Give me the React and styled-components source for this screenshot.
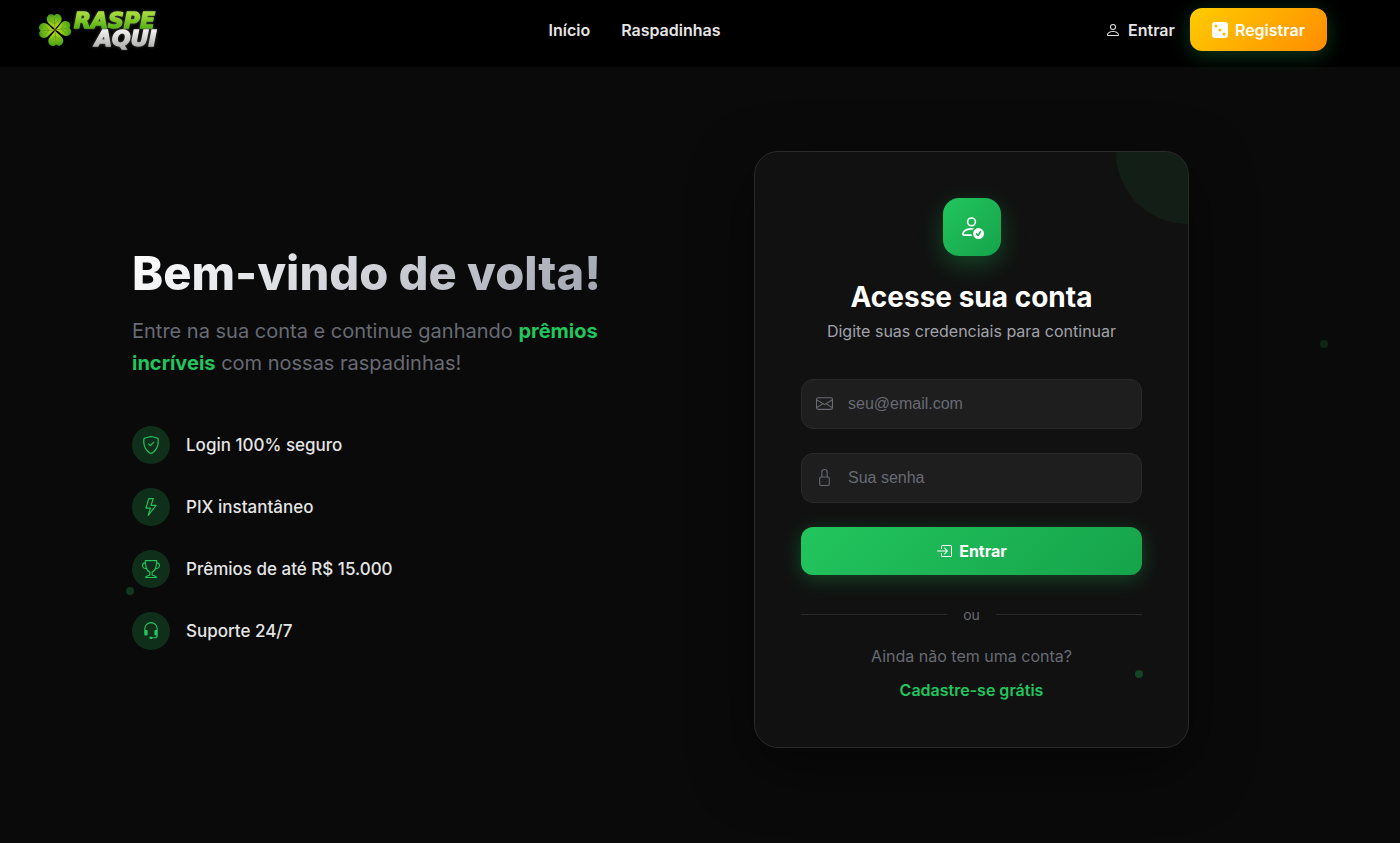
import React from "react";
import styled, { createGlobalStyle } from "styled-components";
import {
  BsBoxArrowInRight,
  BsDice3Fill,
  BsEnvelope,
  BsHeadset,
  BsLightning,
  BsLock,
  BsPerson,
  BsPersonCheck,
  BsShieldCheck,
  BsTrophy
} from "react-icons/bs";

const Colors = {
  Primary: "#22c55e",
  PrimaryDark: "#16a34a",
  Background: "#0a0a0a",
  Card: "#111111",
  Field: "#1e1e1e",
  Border: "#2a2a2a",
  Text: "#e5e5e5",
  Muted: "#a1a1aa",
  Faint: "#686a74"
};

const GlobalStyle = createGlobalStyle`
  *, *::before, *::after {
    box-sizing: border-box;
  }

  body {
    margin: 0;
    background: ${Colors.Background};
    color: ${Colors.Text};
    font-family: Inter, sans-serif;
    font-size: 16px;
  }
`;

const Page = styled.div`
  position: relative;
  min-height: 100vh;
  display: flex;
  flex-direction: column;
  overflow: hidden;
`;

const Header = styled.header`
  padding: 8px 73px 16px 38px;
  display: flex;
  align-items: center;
  justify-content: space-between;
  background: #000;
`;

const LogoLink = styled.a`
  display: flex;
`;

const Nav = styled.nav`
  display: flex;
  gap: 31px;
`;

const NavLink = styled.a`
  display: flex;
  align-items: center;
  gap: 7px;
  color: ${Colors.Text};
  font-weight: 600;
  line-height: 24px;
  text-decoration: none;
`;

const Actions = styled.div`
  display: flex;
  align-items: center;
  gap: 15px;
`;

const Register = styled.a`
  height: 43px;
  padding: 0 22px;
  display: flex;
  align-items: center;
  gap: 7px;
  border-radius: 12px;
  background: linear-gradient(135deg, #ffcc00, #ff8c00);
  box-shadow: 0 4px 20px rgba(34, 197, 94, 0.3);
  color: #fff;
  font-weight: 600;
  text-decoration: none;
`;

const Main = styled.main`
  flex: 1;
  padding: 32px 211px 44px 132px;
  display: flex;
  align-items: center;
  justify-content: space-between;
  gap: 64px;
`;

const Welcome = styled.section`
  flex: 0 1 500px;
`;

const WelcomeTitle = styled.h1`
  width: fit-content;
  margin: 0 0 17px;
  background: linear-gradient(135deg, #fff, #a1a5b0);
  background-clip: text;
  color: transparent;
  font-size: 47px;
  font-weight: 800;
  line-height: 50px;
`;

const WelcomeText = styled.p`
  margin: 0 0 47px;
  color: ${Colors.Faint};
  font-size: 20px;
  line-height: 32px;

  strong {
    color: ${Colors.Primary};
    font-weight: 700;
  }
`;

const Features = styled.ul`
  margin: 0;
  padding: 0;
  display: grid;
  gap: 24px;
  list-style: none;
`;

const Feature = styled.li`
  display: flex;
  align-items: center;
  gap: 16px;
  font-size: 17px;
  font-weight: 500;
`;

const FeatureIcon = styled.span`
  width: 38px;
  height: 38px;
  display: grid;
  place-items: center;
  border-radius: 50%;
  background: rgba(34, 197, 94, 0.2);
  color: ${Colors.Primary};
`;

const Card = styled.section`
  position: relative;
  flex: 0 0 435px;
  padding: 46px;
  overflow: hidden;
  border: 1px solid ${Colors.Border};
  border-radius: 24px;
  background: ${Colors.Card};
  box-shadow: 0 20px 60px rgba(0, 0, 0, 0.5);
  text-align: center;

  &::before {
    content: "";
    position: absolute;
    top: -72px;
    right: -72px;
    width: 144px;
    height: 144px;
    border-radius: 50%;
    background: linear-gradient(135deg, ${Colors.Primary}, ${Colors.PrimaryDark});
    opacity: 0.08;
  }
`;

const CardIcon = styled.div`
  width: 58px;
  height: 58px;
  margin: 0 auto 24px;
  display: grid;
  place-items: center;
  border-radius: 16px;
  background: linear-gradient(135deg, ${Colors.Primary}, ${Colors.PrimaryDark});
  box-shadow: 0 8px 24px rgba(34, 197, 94, 0.3);
  color: #fff;
`;

const CardTitle = styled.h2`
  margin: 0 0 5px;
  color: #fff;
  font-size: 28px;
  font-weight: 700;
  line-height: 34px;
`;

const CardText = styled.p`
  margin: 0 0 36px;
  color: ${Colors.Muted};
  line-height: 24px;
`;

const Form = styled.form`
  display: grid;
  gap: 24px;
`;

const Field = styled.label`
  height: 50px;
  padding: 0 14px;
  display: flex;
  align-items: center;
  gap: 15px;
  border: 1px solid ${Colors.Border};
  border-radius: 12px;
  background: ${Colors.Field};
  color: ${Colors.Faint};

  svg {
    flex: none;
  }
`;

const Input = styled.input`
  flex: 1;
  min-width: 0;
  padding: 0;
  border: 0;
  outline: none;
  background: transparent;
  color: #fff;
  font: 16px "Liberation Sans", sans-serif;

  &::placeholder {
    color: ${Colors.Faint};
  }
`;

const Submit = styled.button`
  height: 48px;
  display: flex;
  align-items: center;
  justify-content: center;
  gap: 7px;
  border: 0;
  border-radius: 12px;
  background: linear-gradient(135deg, ${Colors.Primary}, ${Colors.PrimaryDark});
  box-shadow: 0 4px 20px rgba(34, 197, 94, 0.3);
  color: #fff;
  font: 700 16px Inter, sans-serif;
  cursor: pointer;
`;

const Divider = styled.div`
  margin: 28px 0 17px;
  display: flex;
  align-items: center;
  gap: 16px;
  color: ${Colors.Faint};
  font-size: 14px;
  line-height: 24px;

  &::before,
  &::after {
    content: "";
    flex: 1;
    height: 1px;
    background: ${Colors.Border};
  }
`;

const SignupText = styled.p`
  margin: 0 0 11px;
  color: ${Colors.Faint};
  line-height: 24px;
`;

const SignupLink = styled.a`
  display: block;
  color: ${Colors.Primary};
  font-weight: 600;
  line-height: 22px;
  text-decoration: none;
`;

const Particle = styled.span`
  position: absolute;
  top: ${p => p.$top};
  left: ${p => p.$left};
  width: 8px;
  height: 8px;
  border-radius: 50%;
  background: ${Colors.Primary};
  opacity: ${p => p.$opacity};
  pointer-events: none;
`;

const features = [
  { icon: BsShieldCheck, label: "Login 100% seguro" },
  { icon: BsLightning, label: "PIX instantâneo" },
  { icon: BsTrophy, label: "Prêmios de até R$ 15.000" },
  { icon: BsHeadset, label: "Suporte 24/7" }
];

const particles = [
  { top: "340px", left: "94.3%", opacity: 0.15 },
  { top: "587px", left: "9%", opacity: 0.25 },
  { top: "670px", left: "81.1%", opacity: 0.28 }
];

const Logo = () => (
  <svg width="126" height="43" viewBox="0 0 126 43">
    <defs>
      <radialGradient id="leaf" cx="0" cy="0" r="17" gradientUnits="userSpaceOnUse">
        <stop offset="0" stopColor="#d8e020" />
        <stop offset="0.5" stopColor="#86c41c" />
        <stop offset="1" stopColor="#3f9a14" />
      </radialGradient>
      <linearGradient id="raspe" x1="0" y1="0" x2="0" y2="1">
        <stop offset="0.2" stopColor="#a8dc3c" />
        <stop offset="0.8" stopColor="#56b214" />
      </linearGradient>
      <linearGradient id="aqui" x1="0" y1="0" x2="0" y2="1">
        <stop offset="0.2" stopColor="#f0f0f0" />
        <stop offset="0.8" stopColor="#b5b5b5" />
      </linearGradient>
      <filter id="glow" x="-20%" y="-30%" width="140%" height="160%">
        <feDropShadow dx="0" dy="0" stdDeviation="1.500" floodColor="#b8c8a0" floodOpacity="0.4" />
      </filter>
    </defs>
    <g transform="translate(17 22)">
      {[-4, 82, 176, 268].map(angle => (
        <g key={angle} transform={`rotate(${angle})`}>
          <path
            d="M0 0C-1 -4 -7.500 -6 -7.500 -11C-7.500 -15.500 -2.500 -17.500 0 -14.500C2.500 -17.500 7.500 -15.500 7.500 -11C7.500 -6 1 -4 0 0Z"
            fill="url(#leaf)"
          />
          <path
            d="M0 -1V-12M0 -6L-4 -10M0 -6L4 -10"
            fill="none"
            stroke="#4c8f12"
            strokeWidth="0.600"
          />
        </g>
      ))}
      <circle r="1.200" fill="#4a3d08" />
    </g>
    <g
      fontFamily="DejaVu Sans, sans-serif"
      fontWeight="700"
      fontStyle="italic"
      strokeWidth="1.400"
      filter="url(#glow)"
    >
      <text x="36" y="20" fontSize="22" fill="url(#raspe)" stroke="url(#raspe)">
        RASPE
      </text>
      <text x="57" y="38" fontSize="22" fill="url(#aqui)" stroke="url(#aqui)">
        AQUI
      </text>
    </g>
  </svg>
);

const App = () => {
  return (
    <Page>
      <GlobalStyle />
      <Header>
        <LogoLink href="#inicio" aria-label="Raspe Aqui">
          <Logo />
        </LogoLink>
        <Nav>
          <NavLink href="#inicio">Início</NavLink>
          <NavLink href="#raspadinhas">Raspadinhas</NavLink>
        </Nav>
        <Actions>
          <NavLink href="#entrar">
            <BsPerson size={16} />
            Entrar
          </NavLink>
          <Register href="#registrar">
            <BsDice3Fill size={16} />
            Registrar
          </Register>
        </Actions>
      </Header>

      <Main>
        <Welcome>
          <WelcomeTitle>Bem-vindo de volta!</WelcomeTitle>
          <WelcomeText>
            Entre na sua conta e continue ganhando <strong>prêmios incríveis</strong> com nossas
            raspadinhas!
          </WelcomeText>
          <Features>
            {features.map(({ icon: Icon, label }) => (
              <Feature key={label}>
                <FeatureIcon>
                  <Icon size={18} />
                </FeatureIcon>
                {label}
              </Feature>
            ))}
          </Features>
        </Welcome>

        <Card>
          <CardIcon>
            <BsPersonCheck size={25} />
          </CardIcon>
          <CardTitle>Acesse sua conta</CardTitle>
          <CardText>Digite suas credenciais para continuar</CardText>
          <Form onSubmit={e => e.preventDefault()}>
            <Field>
              <BsEnvelope size={17} />
              <Input type="email" placeholder="seu@email.com" aria-label="E-mail" />
            </Field>
            <Field>
              <BsLock size={17} />
              <Input type="password" placeholder="Sua senha" aria-label="Senha" />
            </Field>
            <Submit type="submit">
              <BsBoxArrowInRight size={16} />
              Entrar
            </Submit>
          </Form>
          <Divider>ou</Divider>
          <SignupText>Ainda não tem uma conta?</SignupText>
          <SignupLink href="#cadastro">Cadastre-se grátis</SignupLink>
        </Card>
      </Main>

      {particles.map(p => (
        <Particle key={p.top} $top={p.top} $left={p.left} $opacity={p.opacity} />
      ))}
    </Page>
  );
};

export default App;
